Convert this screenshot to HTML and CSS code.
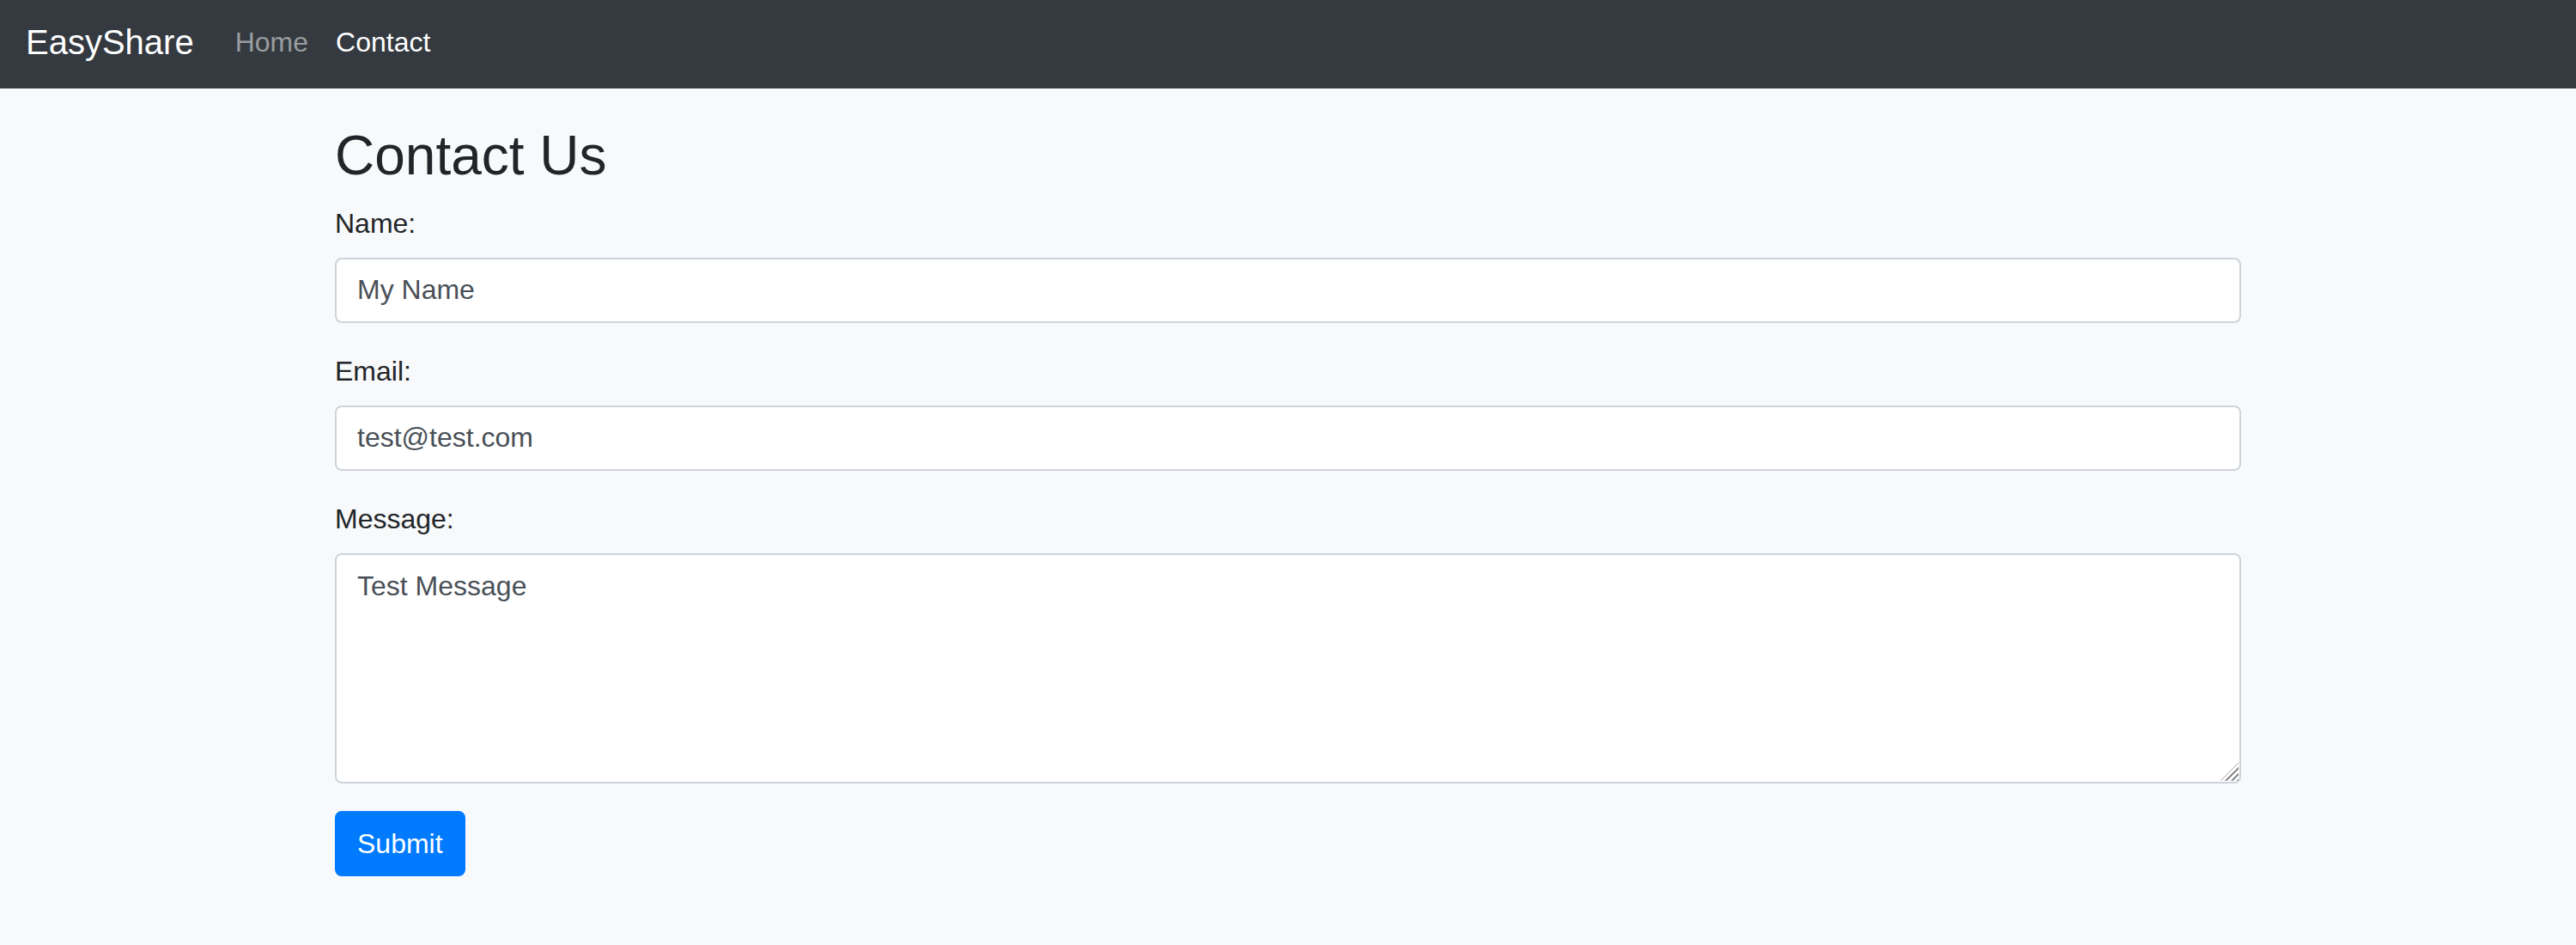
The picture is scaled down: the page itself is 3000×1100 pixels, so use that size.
FILE: index.html
```html
<!DOCTYPE html>
<html lang="en">
<head>
<meta charset="utf-8">
<title>EasyShare - Contact</title>
<link rel="stylesheet" href="styles.css">
</head>
<body>
<nav class="navbar">
  <a class="brand" href="#">EasyShare</a>
  <ul class="nav">
    <li><a class="nav-link" href="#">Home</a></li>
    <li><a class="nav-link active" href="#">Contact</a></li>
  </ul>
</nav>
<main class="container">
  <h1 class="title">Contact Us</h1>
  <form class="form">
    <div class="form-group">
      <label class="label" for="name">Name:</label>
      <input class="control" id="name" type="text" value="My Name">
    </div>
    <div class="form-group">
      <label class="label" for="email">Email:</label>
      <input class="control" id="email" type="email" value="test@test.com">
    </div>
    <div class="form-group">
      <label class="label" for="message">Message:</label>
      <div class="area-wrap">
        <textarea class="control area" id="message" rows="5">Test Message</textarea>
        <span class="grip"></span>
      </div>
    </div>
    <button class="btn" type="button">Submit</button>
  </form>
</main>
</body>
</html>
```

FILE: styles.css
```css
html {
  background: #f8f9fa;
}
body {
  margin: 0;
  background: #f8f9fa;
  color: #212529;
  font-family: "Liberation Sans", Arial, sans-serif;
  font-size: 32px;
  line-height: 48px;
}
.navbar {
  box-sizing: border-box;
  height: 103px;
  padding: 0 30px 6px 30px;
  background: #343a40;
  display: flex;
  align-items: center;
}
.brand {
  font-size: 40px;
  line-height: 60px;
  color: #fff;
  text-decoration: none;
  margin-right: 32px;
}
.nav {
  list-style: none;
  margin: 0;
  padding: 0;
  display: flex;
}
.nav-link {
  display: block;
  padding: 0 16px;
  font-size: 32px;
  line-height: 48px;
  color: rgba(255, 255, 255, 0.5);
  text-decoration: none;
}
.nav-link.active {
  color: #fff;
}
.container {
  box-sizing: border-box;
  max-width: 2280px;
  margin: 0 auto;
  padding: 40px 30px 0 30px;
}
.title {
  margin: 0 0 16px 0;
  font-size: 64px;
  line-height: 76.8px;
  font-weight: 400;
}
.form {
  margin: 0;
}
.form-group {
  margin-bottom: 32px;
}
.label {
  display: inline-block;
  margin-bottom: 16px;
}
.control {
  display: block;
  box-sizing: border-box;
  width: 100%;
  height: 76px;
  margin: 0;
  padding: 12px 24px;
  font-family: inherit;
  font-size: 32px;
  line-height: 48px;
  color: #495057;
  background: #fff;
  border: 2px solid #ced4da;
  border-radius: 8px;
  outline: none;
}
.area-wrap {
  position: relative;
}
.area {
  height: 268px;
  resize: none;
  overflow: auto;
}
.grip {
  position: absolute;
  right: 3px;
  bottom: 3px;
  width: 21px;
  height: 21px;
  background: repeating-linear-gradient(135deg, transparent 0 3px, #8a8a8a 3px 5px);
  clip-path: polygon(100% 0, 100% 100%, 0 100%);
}
.btn {
  display: inline-block;
  margin: 0;
  padding: 12px 24px;
  font-family: inherit;
  font-size: 32px;
  line-height: 48px;
  color: #fff;
  background: #007bff;
  border: 2px solid #007bff;
  border-radius: 8px;
  cursor: pointer;
}
```
